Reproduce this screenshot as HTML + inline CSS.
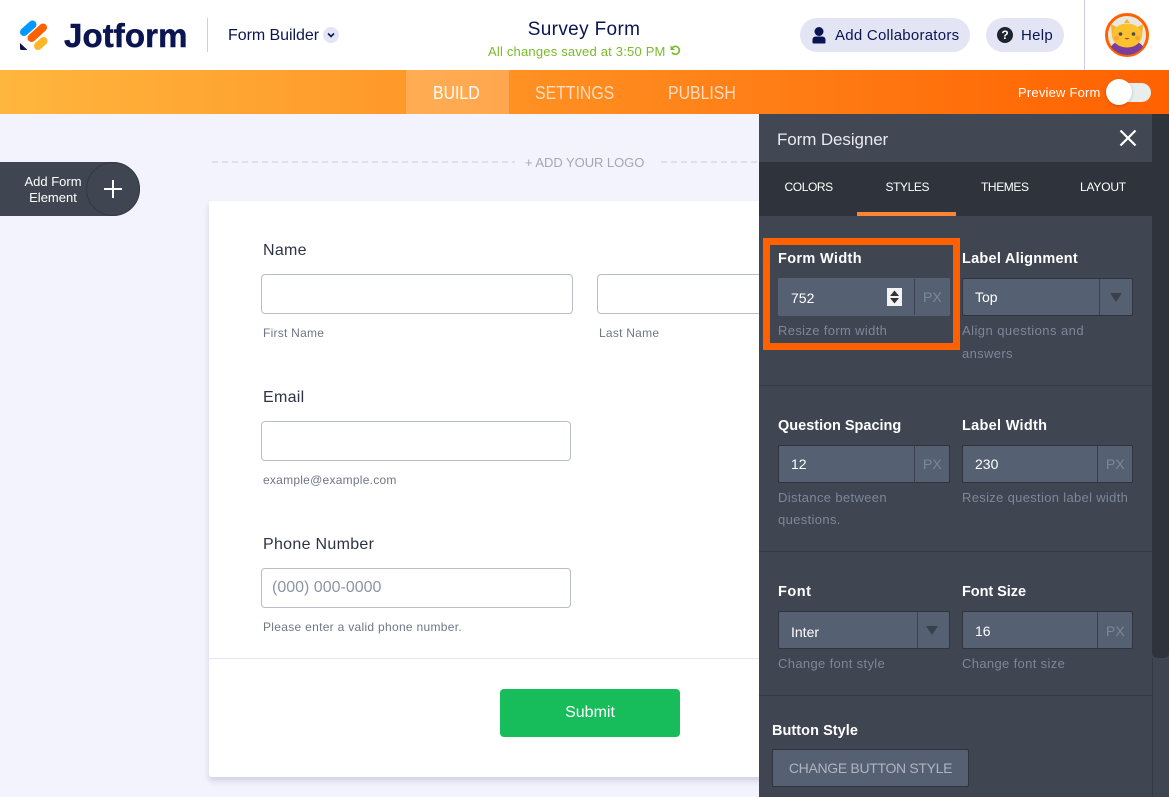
<!DOCTYPE html>
<html><head><meta charset="utf-8">
<style>
html,body{margin:0;padding:0;width:1169px;height:797px;overflow:hidden;background:#f3f3fe;font-family:"Liberation Sans",sans-serif}
#r{position:relative;width:1169px;height:797px;overflow:hidden}
.a{position:absolute}
.t{position:absolute;white-space:nowrap;line-height:1}
.in{position:absolute;box-sizing:border-box;background:#fff;border:1px solid #b8bdc9;border-radius:4px;height:40px}
.lb{font-size:16px;color:#2c3345;letter-spacing:.3px}
.sb{font-size:12px;color:#6f7687;letter-spacing:.25px}
.pl{font-size:14.5px;font-weight:bold;color:#fff;letter-spacing:.05px}
.hn{font-size:13px;color:#7d8799;letter-spacing:.35px}
.fld{position:absolute;box-sizing:border-box;background:#556072;border:1px solid #2f343e;border-radius:2px;height:38px}
.fld i{position:absolute;top:0;bottom:0;width:1px;background:#3a404b}
.v{font-size:14px;color:#fff}
.px{font-size:14px;color:#7d8799}
.tab{font-size:12px;color:#fff;letter-spacing:-.4px}
.nav{font-size:18px;color:#ffdcc0;transform:scaleX(.88);transform-origin:0 0}
.hr{position:absolute;left:759px;width:393px;height:1px;background:#343943}
.dash{position:absolute;top:161px;height:2px;background:repeating-linear-gradient(90deg,#dfdfe9 0 6px,transparent 6px 10px)}
</style></head><body><div id="r">

<!-- header -->
<div class="a" style="left:0;top:0;width:1169px;height:70px;background:#fff"></div>
<svg class="a" style="left:18px;top:20px" width="32" height="32" viewBox="18 20 32 32">
<line x1="24" y1="32" x2="32.500" y2="24.500" stroke="#0099ff" stroke-width="8" stroke-linecap="round"/>
<line x1="31.500" y1="38" x2="43" y2="27.500" stroke="#ff6100" stroke-width="8" stroke-linecap="round"/>
<line x1="38" y1="46" x2="43.500" y2="41" stroke="#ffb629" stroke-width="8" stroke-linecap="round"/>
<path d="M20 43L27.500 50H21.500Q20 50 20 48.500Z" fill="#0a1551"/>
</svg>
<div class="t" style="left:64px;top:19px;font-size:33px;font-weight:bold;color:#0a1551;letter-spacing:.1px;-webkit-text-stroke:.5px #0a1551">Jotform</div>
<div class="a" style="left:207px;top:18px;width:1px;height:34px;background:#c8ceed"></div>
<div class="t" style="left:228px;top:28px;font-size:16px;color:#0a1551;letter-spacing:-.05px">Form Builder</div>
<div class="a" style="left:323px;top:27px;width:16px;height:16px;border-radius:50%;background:#e3e5f5"></div>
<svg class="a" style="left:323px;top:27px" width="16" height="16"><path d="M5 6.500L8 9.500L11 6.500" fill="none" stroke="#0a1551" stroke-width="1.600"/></svg>
<div class="t" style="left:484px;width:200px;text-align:center;top:20px;font-size:19px;color:#0a1551;letter-spacing:.35px">Survey Form</div>
<div class="t" style="left:488px;top:44.500px;font-size:13px;color:#78bb28;letter-spacing:.2px">All changes saved at 3:50 PM</div>
<svg class="a" style="left:669px;top:44px" width="13" height="13" viewBox="0 0 13 13"><path d="M3.500 3.500A4 4 0 1 1 3 8.500" fill="none" stroke="#78bb28" stroke-width="1.700"/><path d="M1.500 1.500V6H6Z" fill="#78bb28"/></svg>

<div class="a" style="left:800px;top:18px;width:170px;height:34px;border-radius:17px;background:#e3e5f5"></div>
<svg class="a" style="left:811px;top:26px" width="16" height="18" viewBox="0 0 16 18"><circle cx="8" cy="5.500" r="4.500" fill="#0a1551"/><path d="M1.500 16.500V14Q1.500 10.500 5 10.500H11Q14.500 10.500 14.500 14V16.500Q14.500 17.500 13.500 17.500H2.500Q1.500 17.500 1.500 16.500Z" fill="#0a1551"/></svg>
<div class="t" style="left:835px;top:28px;font-size:15px;color:#0a1551;letter-spacing:.25px">Add Collaborators</div>
<div class="a" style="left:986px;top:18px;width:78px;height:34px;border-radius:17px;background:#e3e5f5"></div>
<div class="a" style="left:997px;top:27px;width:16px;height:16px;border-radius:50%;background:#1b2430"></div>
<div class="t" style="left:997px;width:16px;text-align:center;top:29px;font-size:12px;font-weight:bold;color:#fff">?</div>
<div class="t" style="left:1021px;top:28px;font-size:15px;color:#0a1551;letter-spacing:.3px">Help</div>
<div class="a" style="left:1084px;top:0;width:1px;height:70px;background:#c8ceed"></div>
<svg class="a" style="left:1105px;top:13px" width="44" height="44" viewBox="0 0 44 44">
<defs><clipPath id="c"><circle cx="22" cy="22" r="20"/></clipPath></defs>
<circle cx="22" cy="22" r="20.500" fill="#e9e8df" stroke="#ff6100" stroke-width="3"/>
<g clip-path="url(#c)">
<path d="M5 36Q8 27 22 27Q36 27 39 36V44H5Z" fill="#7a3f9d"/>
<path d="M6 11L13 15L31 15L38 11L37 24L7 24Z" fill="#f7b12f"/>
<path d="M19 10L22 6L25 10Z" fill="#f7b12f"/>
<ellipse cx="22" cy="22.500" rx="15" ry="12" fill="#fbc230"/>
<circle cx="15.500" cy="21" r="1.800" fill="#4a4a4a"/><circle cx="28.500" cy="21" r="1.800" fill="#4a4a4a"/>
<circle cx="11.500" cy="25" r="2.500" fill="#f7a63c"/><circle cx="32.500" cy="25" r="2.500" fill="#f7a63c"/>
<path d="M19.500 25Q22 28 24.500 25" fill="#c0392b"/>
</g></svg>

<!-- orange bar -->
<div class="a" style="left:0;top:70px;width:1169px;height:44px;background:linear-gradient(90deg,#ffb63e 0%,#ff6100 100%)"></div>
<div class="a" style="left:406px;top:70px;width:103px;height:44px;background:rgba(255,255,255,.2)"></div>
<div class="t nav" style="left:433px;top:84px;color:#fff">BUILD</div>
<div class="t nav" style="left:535px;top:84px">SETTINGS</div>
<div class="t nav" style="left:668px;top:84px">PUBLISH</div>
<div class="t" style="left:1018px;top:85.500px;font-size:13px;color:#fff;letter-spacing:.2px">Preview Form</div>
<div class="a" style="left:1110px;top:83px;width:41px;height:19px;border-radius:10px;background:#e8eded"></div>
<div class="a" style="left:1106px;top:79px;width:26px;height:26px;border-radius:50%;background:#fff;box-shadow:0 1px 3px rgba(0,0,0,.2)"></div>

<!-- add element -->
<div class="a" style="left:0;top:162px;width:140px;height:54px;background:#3f4551;border-radius:0 27px 27px 0"></div>
<div class="a" style="left:86px;top:162px;width:54px;height:54px;box-sizing:border-box;border-radius:50%;border:1px solid #343943"></div>
<div class="t" style="left:12px;width:82px;text-align:center;top:173.500px;font-size:13px;color:#fff;line-height:16px">Add Form<br>Element</div>
<div class="a" style="left:104px;top:188px;width:18px;height:2px;background:#fff"></div>
<div class="a" style="left:112px;top:180px;width:2px;height:18px;background:#fff"></div>

<!-- logo -->
<div class="dash" style="left:212px;width:303px"></div>
<div class="dash" style="left:661px;width:98px"></div>
<div class="t" style="left:525px;top:155.500px;font-size:13px;color:#a4a7b4;letter-spacing:-.05px">+ ADD YOUR LOGO</div>

<!-- form -->
<div class="a" style="left:209px;top:201px;width:600px;height:576px;background:#fff;border-radius:3px;box-shadow:0 4px 6px rgba(86,92,130,.22)"></div>
<div class="t lb" style="left:263px;top:243px">Name</div>
<div class="in" style="left:261px;top:274px;width:312px"></div>
<div class="in" style="left:597px;top:274px;width:200px"></div>
<div class="t sb" style="left:263px;top:326.500px">First Name</div>
<div class="t sb" style="left:599px;top:326.500px">Last Name</div>
<div class="t lb" style="left:263px;top:390px">Email</div>
<div class="in" style="left:261px;top:421px;width:310px"></div>
<div class="t sb" style="left:263px;top:473.500px">example@example.com</div>
<div class="t lb" style="left:263px;top:537px">Phone Number</div>
<div class="in" style="left:261px;top:568px;width:310px"></div>
<div class="t" style="left:272px;top:580px;font-size:16px;color:#8d96a5">(000) 000-0000</div>
<div class="t sb" style="left:263px;top:620.500px;letter-spacing:.3px">Please enter a valid phone number.</div>
<div class="a" style="left:209px;top:658px;width:600px;height:1px;background:#e3e5f5"></div>
<div class="a" style="left:500px;top:689px;width:180px;height:48px;background:#18bd5b;border-radius:4px"></div>
<div class="t" style="left:500px;width:180px;text-align:center;top:705px;font-size:16px;color:#fff">Submit</div>

<!-- panel -->
<div class="a" style="left:759px;top:114px;width:410px;height:683px;background:#3f4551"></div>
<div class="a" style="left:1152px;top:114px;width:17px;height:544px;background:#2f333c;border-radius:0 0 5px 5px"></div>
<div class="a" style="left:1152px;top:658px;width:1px;height:139px;background:#343943"></div>
<div class="a" style="left:759px;top:114px;width:393px;height:48px;background:#414753"></div>
<div class="t" style="left:777px;top:131px;font-size:17px;color:#e8eaf0;letter-spacing:-.1px">Form Designer</div>
<svg class="a" style="left:1119px;top:129px" width="18" height="18"><path d="M1.500 1.500L16.500 16.500M16.500 1.500L1.500 16.500" stroke="#fff" stroke-width="2.200"/></svg>
<div class="a" style="left:759px;top:162px;width:393px;height:54px;background:#2f333c"></div>
<div class="a" style="left:857px;top:212px;width:99px;height:4px;background:#ff8533"></div>
<div class="t tab" style="left:784.500px;top:181px">COLORS</div>
<div class="t tab" style="left:885.500px;top:181px;letter-spacing:-.4px">STYLES</div>
<div class="t tab" style="left:981px;top:181px">THEMES</div>
<div class="t tab" style="left:1080px;top:181px;letter-spacing:-.2px">LAYOUT</div>

<div class="t pl" style="left:778px;top:252px;letter-spacing:.35px">Form Width</div>
<div class="fld" style="left:778px;top:278px;width:172px;border-color:#556072"><i style="left:135px"></i></div>
<div class="t v" style="left:791px;top:291px">752</div>
<div class="a" style="left:887px;top:288px;width:15px;height:18px;background:#f3f3f3"></div>
<svg class="a" style="left:887px;top:288px" width="15" height="18"><path d="M7.500 2.500L12 8H3ZM3 10H12L7.500 15.500Z" fill="#333"/></svg>
<div class="t px" style="left:923px;top:290px">PX</div>
<div class="t hn" style="left:778px;top:324px">Resize form width</div>
<div class="a" style="left:763px;top:238px;width:197px;height:112px;box-sizing:border-box;border:7px solid #ff6100"></div>

<div class="t pl" style="left:962px;top:252px;letter-spacing:.25px">Label Alignment</div>
<div class="fld" style="left:962px;top:278px;width:171px"><i style="left:136px"></i></div>
<div class="t v" style="left:975px;top:290px">Top</div>
<svg class="a" style="left:1108px;top:293px" width="16" height="10"><path d="M2 0H14L8 9Z" fill="#39404b"/></svg>
<div class="t hn" style="left:962px;top:324px;letter-spacing:.45px">Align questions and</div>
<div class="t hn" style="left:962px;top:347px">answers</div>
<div class="hr" style="top:385px"></div>

<div class="t pl" style="left:778px;top:419px;letter-spacing:0">Question Spacing</div>
<div class="fld" style="left:778px;top:445px;width:172px"><i style="left:135px"></i></div>
<div class="t v" style="left:791px;top:457px">12</div>
<div class="t px" style="left:923px;top:457px">PX</div>
<div class="t hn" style="left:778px;top:491px">Distance between</div>
<div class="t hn" style="left:778px;top:513px">questions.</div>
<div class="t pl" style="left:962px;top:419px;letter-spacing:.3px">Label Width</div>
<div class="fld" style="left:962px;top:445px;width:171px"><i style="left:134px"></i></div>
<div class="t v" style="left:975px;top:457px">230</div>
<div class="t px" style="left:1106px;top:457px">PX</div>
<div class="t hn" style="left:962px;top:491px;letter-spacing:.32px">Resize question label width</div>
<div class="hr" style="top:551px"></div>

<div class="t pl" style="left:778px;top:585px;letter-spacing:.5px">Font</div>
<div class="fld" style="left:778px;top:611px;width:172px"><i style="left:138px"></i></div>
<div class="t v" style="left:791px;top:625px">Inter</div>
<svg class="a" style="left:924px;top:626px" width="16" height="10"><path d="M2 0H14L8 9Z" fill="#39404b"/></svg>
<div class="t hn" style="left:778px;top:657px">Change font style</div>
<div class="t pl" style="left:962px;top:585px;letter-spacing:-.05px">Font Size</div>
<div class="fld" style="left:962px;top:611px;width:171px"><i style="left:134px"></i></div>
<div class="t v" style="left:975px;top:624px">16</div>
<div class="t px" style="left:1106px;top:624px">PX</div>
<div class="t hn" style="left:962px;top:657px">Change font size</div>
<div class="hr" style="top:695px"></div>

<div class="t pl" style="left:772px;top:723.500px">Button Style</div>
<div class="fld" style="left:772px;top:749px;width:197px"></div>
<div class="t" style="left:772px;width:197px;text-align:center;top:761px;font-size:14px;color:#aeb4c0;letter-spacing:-.32px">CHANGE BUTTON STYLE</div>

</div></body></html>
